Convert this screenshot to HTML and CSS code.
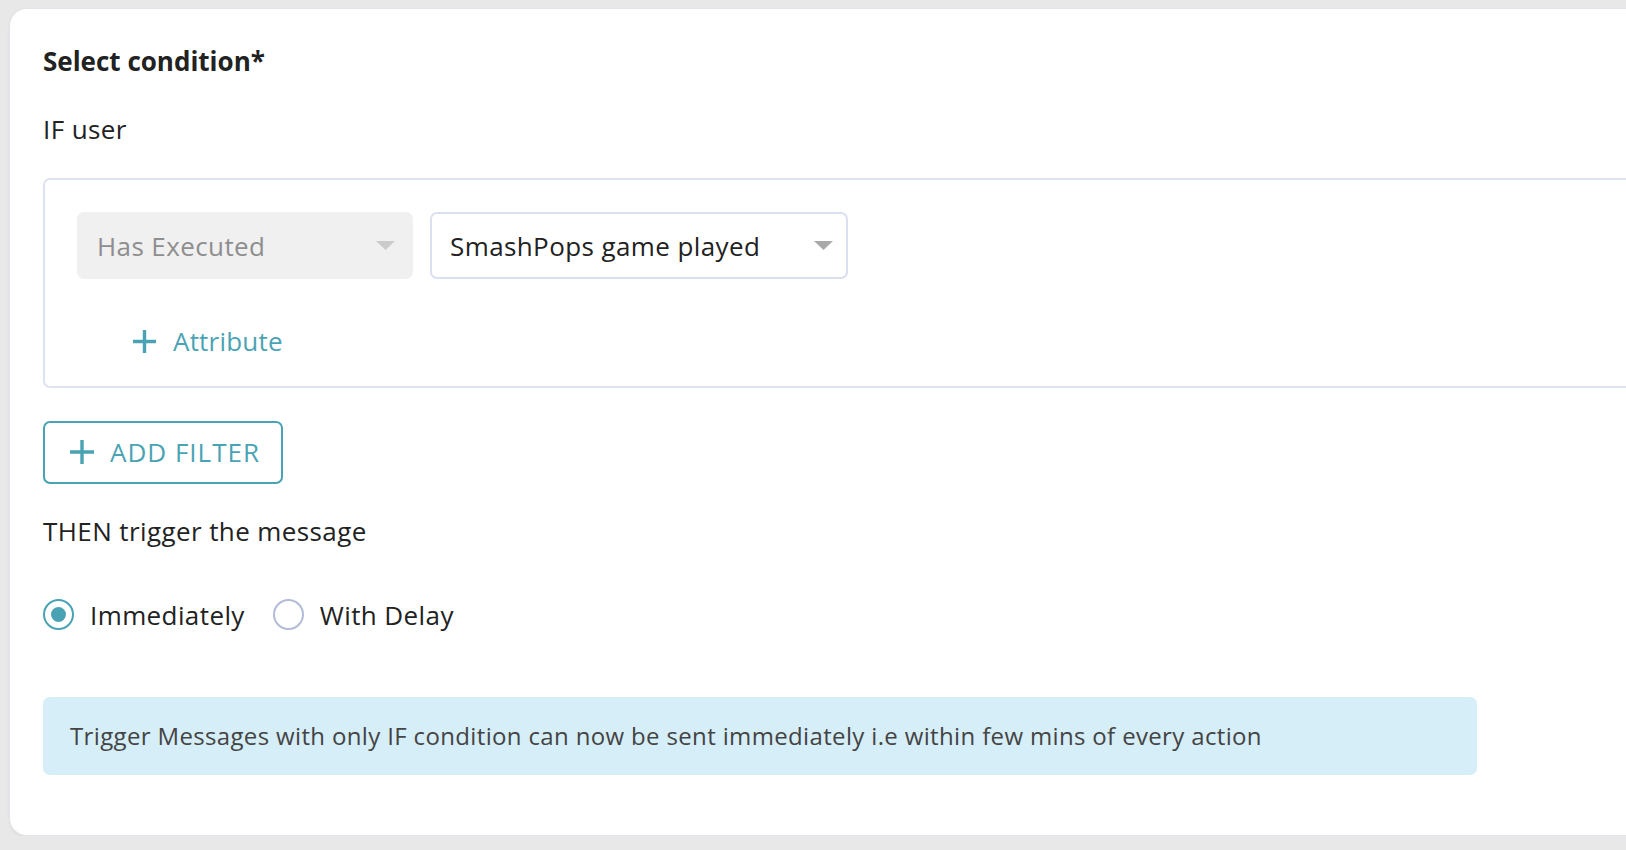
FILE: index.html
```html
<!DOCTYPE html>
<html lang="en">
<head>
  <meta charset="UTF-8" />
  <title>Select condition</title>
  <link rel="stylesheet" href="styles.css">
</head>
<body>
  <div class="card">
    <h2 class="title">Select condition*</h2>
    <p class="label if-label">IF user</p>

    <!-- filter block -->
    <div class="filter-box">
      <div class="filter-row">
        <div class="select disabled">
          <span>Has Executed</span>
          <svg class="caret" width="19" height="9" viewBox="0 0 19 9"><path d="M0 0h19L9.5 9z" fill="#cbcbcb"/></svg>
        </div>
        <div class="select event">
          <span>SmashPops game played</span>
          <svg class="caret" width="19" height="9" viewBox="0 0 19 9"><path d="M0 0h19L9.5 9z" fill="#a9a9a9"/></svg>
        </div>
      </div>
      <a class="attr-link" href="#">
        <svg class="plus" width="23" height="23" viewBox="0 0 23 23"><path d="M11.5 0v23M0 11.5h23" stroke="currentColor" stroke-width="3.4"/></svg>
        Attribute
      </a>
    </div>

    <button class="add-filter">
      <svg class="plus" width="24" height="24" viewBox="0 0 24 24"><path d="M12 0v24M0 12h24" stroke="currentColor" stroke-width="3.4"/></svg>
      ADD FILTER
    </button>

    <p class="label then-label">THEN trigger the message</p>

    <div class="radio-group">
      <label class="radio">
        <span class="dot checked"></span>
        Immediately
      </label>
      <label class="radio">
        <span class="dot"></span>
        With Delay
      </label>
    </div>

    <div class="info">
      Trigger Messages with only IF condition can now be sent immediately i.e within few mins of every action
    </div>
  </div>
</body>
</html>
```

FILE: styles.css
```css
html, body {
  margin: 0;
  padding: 0;
  overflow: hidden;
}
body {
  background: #e8e8e8;
  font-family: "Open Sans", Lato, sans-serif;
  color: #222;
  font-size: 26px;
  line-height: 32px;
  letter-spacing: 0.4px;
}
.card {
  margin: 8px 0 0 9px;
  width: 1700px;
  background: #fff;
  border: 1px solid #e3e5ec;
  border-radius: 18px;
  box-shadow: 0 1px 3px rgba(0, 0, 0, 0.06);
  padding: 36px 0 60px 33px;
}
.title {
  margin: 0;
  font-size: 26px;
  line-height: 32px;
  font-weight: 700;
  letter-spacing: 0;
  color: #222;
}
.label {
  margin: 0;
  color: #222;
}
.if-label {
  margin-top: 36px;
}
.filter-box {
  margin-top: 33px;
  border: 2px solid #dfe2ef;
  border-radius: 7px;
  padding: 32px 0 27px 32px;
}
.filter-row {
  display: flex;
  gap: 17px;
}
.select {
  display: flex;
  align-items: center;
  justify-content: space-between;
  box-sizing: border-box;
  height: 67px;
  border-radius: 7px;
  padding: 0 18px 0 20px;
}
.select.disabled {
  width: 336px;
  background: #f0f0f0;
  color: #8e8e8e;
}
.select.event {
  width: 418px;
  border: 2px solid #dcdff0;
  color: #222;
  padding-left: 18px;
  padding-right: 13px;
}
.attr-link {
  display: inline-flex;
  align-items: center;
  gap: 17px;
  margin: 46px 0 0 56px;
  color: #4aa3b4;
  text-decoration: none;
  letter-spacing: 0.2px;
}
.add-filter {
  display: flex;
  align-items: center;
  gap: 16px;
  margin-top: 33px;
  width: 240px;
  height: 63px;
  padding: 0 0 0 25px;
  background: #fff;
  border: 2px solid #4aa3b4;
  border-radius: 7px;
  color: #4aa3b4;
  font-family: inherit;
  font-size: 26px;
  letter-spacing: 1px;
  cursor: pointer;
}
.then-label {
  margin-top: 31px;
}
.radio-group {
  display: flex;
  gap: 28px;
  margin-top: 52px;
}
.radio {
  display: flex;
  align-items: center;
  gap: 16px;
  color: #222;
}
.dot {
  width: 31px;
  height: 31px;
  box-sizing: border-box;
  border-radius: 50%;
  border: 2px solid #b3bbd9;
  display: flex;
  align-items: center;
  justify-content: center;
}
.dot.checked {
  border-color: #4aa3b4;
}
.dot.checked::after {
  content: "";
  width: 15px;
  height: 15px;
  border-radius: 50%;
  background: #4aa3b4;
}
.info {
  margin-top: 66px;
  width: 1434px;
  box-sizing: border-box;
  height: 78px;
  display: flex;
  align-items: center;
  padding-left: 27px;
  background: #d6eef8;
  border-radius: 7px;
  color: #444;
  font-size: 24px;
  letter-spacing: 0.35px;
}
```
